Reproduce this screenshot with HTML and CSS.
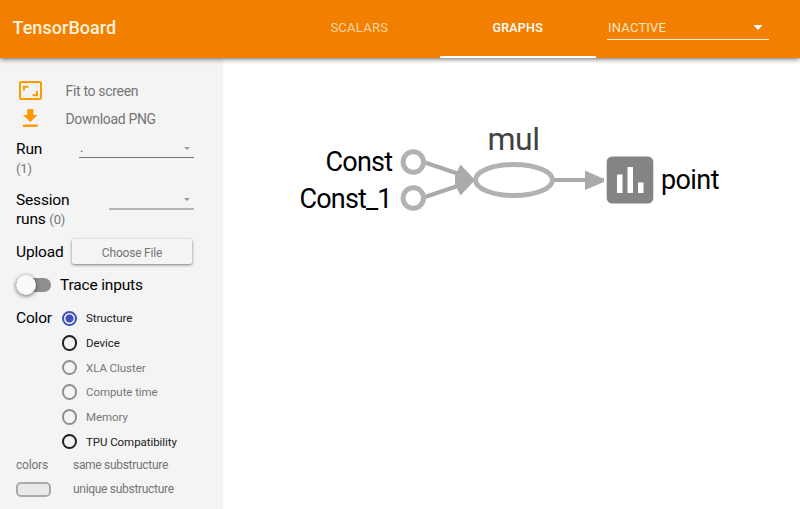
FILE: index.html
```html
<!DOCTYPE html>
<html lang="en">
<head>
<meta charset="utf-8">
<title>TensorBoard</title>
<link rel="stylesheet" href="styles.css">
</head>
<body>
<header class="toolbar">
  <h1 class="brand">TensorBoard</h1>
  <nav class="tabs">
    <div class="tab">SCALARS</div>
    <div class="tab selected">GRAPHS</div>
  </nav>
  <div class="inactive"><span>INACTIVE</span><svg width="10" height="5" viewBox="0 0 10 5"><path d="M0.5 0h9L5 5z" fill="#fff"/></svg></div>
</header>
<div class="content">
  <aside class="sidebar">
    <div class="tool"><svg width="24" height="20" viewBox="0 0 24 20" fill="none" stroke="#fb9a05" stroke-width="2"><rect x="1" y="1" width="21" height="17" rx="1.5"/><path d="M5 9.500V5.800h4.500M18 10v4.200h-4.500"/></svg><span>Fit to screen</span></div>
    <div class="tool"><svg width="24" height="20" viewBox="0 0 24 20" fill="#fb9a05"><path d="M8.300 0h6v6h4.300l-7.300 7L4 6h4.300zM4 15.500h14.600v2.500H4z"/></svg><span>Download PNG</span></div>
    <div class="field run">
      <div class="label">Run<br><small>(1)</small></div>
      <div class="select"><span>.</span><i class="caret"></i></div>
    </div>
    <div class="field session">
      <div class="label">Session<br>runs <small>(0)</small></div>
      <div class="select pale"><span></span><i class="caret"></i></div>
    </div>
    <div class="upload"><div class="label">Upload</div><button class="file">Choose File</button></div>
    <div class="trace"><span class="toggle"><span class="knob"></span></span><div class="label">Trace inputs</div></div>
    <div class="color">
      <div class="label">Color</div>
      <div class="options">
        <div class="option checked"><i class="radio"></i><span>Structure</span></div>
        <div class="option"><i class="radio"></i><span>Device</span></div>
        <div class="option disabled"><i class="radio"></i><span>XLA Cluster</span></div>
        <div class="option disabled"><i class="radio"></i><span>Compute time</span></div>
        <div class="option disabled"><i class="radio"></i><span>Memory</span></div>
        <div class="option"><i class="radio"></i><span>TPU Compatibility</span></div>
      </div>
    </div>
    <div class="legend">
      <span>colors</span><span>same substructure</span>
      <i class="swatch"></i><span>unique substructure</span>
    </div>
  </aside>
  <main class="graph">
    <svg width="577" height="451" viewBox="223 58 577 451">
      <g stroke="#aaa" stroke-width="4" fill="none">
        <path d="M425 162.500L462 175M425 197L462 184.500M554 180h50"/>
      </g>
      <path d="M460.500 164.500L475 180l-14.500 15.500l-5.500-11v-9zM585 170.500v19.500l19-8v-3z" fill="#aaa"/>
      <g stroke="#b2b2b2" stroke-width="5" fill="#fff">
        <circle cx="413.300" cy="162" r="10.200"/>
        <circle cx="413.300" cy="198" r="10.200"/>
        <ellipse cx="514" cy="180" rx="38.500" ry="15.500"/>
      </g>
      <rect x="606.700" y="156.500" width="46.600" height="47" rx="5.500" fill="#848484"/>
      <path d="M617 174.500h5.500v18.500H617zM627.500 167h5.500v26h-5.500zM638 182.500h5.500V193H638z" fill="#fff"/>
      <text x="325.500" y="171" textLength="67.500" class="node">Const</text>
      <text x="299.500" y="207.500" textLength="93" class="node">Const_1</text>
      <text x="487.500" y="150" textLength="52.500" class="op">mul</text>
      <text x="661" y="188.500" textLength="58.500" class="node">point</text>
    </svg>
  </main>
</div>
</body>
</html>
```
FILE: styles.css
```css
* { box-sizing: border-box; }
body {
  margin: 0;
  width: 800px;
  height: 509px;
  overflow: hidden;
  display: flex;
  flex-direction: column;
  background: #fff;
  font-family: Roboto, "Liberation Sans", sans-serif;
  color: #111;
}
svg { display: block; }
.toolbar {
  position: relative;
  flex: none;
  height: 58px;
  display: flex;
  background: #f37f00;
  box-shadow: 0 1px 5px rgba(0, 0, 0, .6);
  color: #fff3df;
}
.brand {
  margin: 0;
  width: 284.500px;
  padding-left: 12.500px;
  font-size: 18px;
  font-weight: 500;
  line-height: 56px;
  letter-spacing: .05px;
}
.tabs { display: flex; }
.tab {
  width: 155.500px;
  height: 58px;
  padding-right: 6px;
  text-align: center;
  font-size: 13px;
  font-weight: 400;
  line-height: 56px;
  letter-spacing: .25px;
  color: #ffd5a0;
}
.tab.selected {
  padding: 0;
  border-bottom: 2px solid #fff;
  font-size: 12.500px;
  font-weight: 500;
  color: #fff;
}
.inactive {
  width: 162px;
  height: 25px;
  margin: 15px 0 0 11.500px;
  padding: 0 6px 0 1px;
  display: flex;
  align-items: center;
  justify-content: space-between;
  border-bottom: 1px solid #fff0d8;
  font-size: 13px;
  letter-spacing: .2px;
  color: #ffe5c3;
}
.content { flex: 1; display: flex; }
.sidebar {
  width: 223px;
  padding: 19px 0 0 16px;
  background: #f4f4f4;
}
.tool {
  height: 28px;
  padding-left: 3px;
  display: flex;
  align-items: center;
  gap: 22.500px;
  font-size: 14px;
  letter-spacing: -.32px;
  color: #757575;
}
.label { font-size: 15.500px; letter-spacing: -.17px; color: #000; }
.label small { font-size: 13px; color: #757575; }
.field {
  display: flex;
  justify-content: space-between;
  width: 178px;
  height: 37px;
  line-height: 18.500px;
}
.run { margin-top: 7px; }
.session { margin-top: 14px; }
.select {
  width: 115px;
  height: 18px;
  padding: 0 4px 0 1px;
  display: flex;
  align-items: center;
  justify-content: space-between;
  border-bottom: 1px solid #777;
  font-size: 13px;
  color: #666;
}
.select.pale { width: 85px; height: 19px; border-bottom: 2px solid #b5b5b5; }
.caret { border: 3px solid transparent; border-top: 3px solid #999; border-bottom: 0; }
.upload {
  height: 28px;
  margin-top: 10px;
  display: flex;
  align-items: center;
  gap: 8px;
}
.upload .label { width: 48px; }
.file {
  width: 120px;
  height: 25px;
  margin: 0 0 2px;
  padding: 3px 0 0;
  border: 0;
  border-radius: 2px;
  background: #f4f4f4;
  box-shadow: 0 1px 3px rgba(0, 0, 0, .5);
  font: 12px Roboto, sans-serif;
  letter-spacing: -.2px;
  color: #757575;
}
.trace {
  height: 28px;
  margin-top: 5px;
  display: flex;
  align-items: center;
  gap: 9px;
}
.toggle {
  width: 35px;
  height: 14px;
  display: flex;
  align-items: center;
  border-radius: 7px;
  background: #8e8e8e;
}
.knob {
  width: 20px;
  height: 20px;
  border-radius: 50%;
  background: #fafafa;
  box-shadow: 0 1px 4px rgba(0, 0, 0, .6);
}
.color {
  display: flex;
  height: 147px;
  margin-top: 7px;
}
.color .label { width: 45.500px; line-height: 24px; }
.option {
  height: 24.650px;
  display: flex;
  align-items: center;
  gap: 9px;
  font-size: 11.500px;
  letter-spacing: -.06px;
  color: #212121;
}
.radio {
  width: 15.500px;
  height: 15.500px;
  border: 2px solid #212121;
  border-radius: 50%;
}
.checked .radio {
  border-color: #3f51b5;
  background: radial-gradient(circle, #3f51c5 3.700px, transparent 4.400px);
}
.disabled { color: #777; }
.disabled .radio { border-color: #909090; }
.legend {
  display: grid;
  grid-template-columns: 57px 1fr;
  grid-auto-rows: 24px;
  align-items: center;
  font-size: 12px;
  letter-spacing: -.3px;
  color: #757575;
}
.legend span:first-child { letter-spacing: -.2px; }
.swatch {
  width: 35px;
  height: 15px;
  border: 2px solid #aaa;
  border-radius: 5px;
  background: #e9e9e9;
}
.graph { flex: 1; }
.node { font-size: 27px; fill: #000; }
.op { font-size: 32px; fill: #424242; }
```
